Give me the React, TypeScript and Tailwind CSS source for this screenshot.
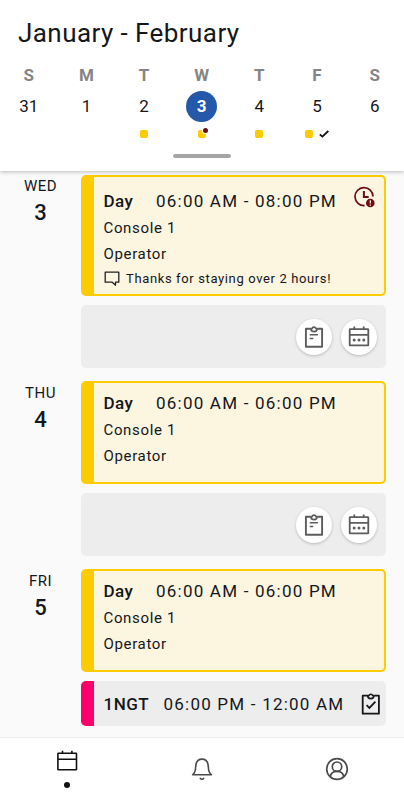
import type { ReactNode } from "react"

type Mark = "shift" | "alert" | "done"

const week: { day: string; date: number; mark?: Mark; selected?: boolean }[] = [
    { day: "S", date: 31 },
    { day: "M", date: 1 },
    { day: "T", date: 2, mark: "shift" },
    { day: "W", date: 3, mark: "alert", selected: true },
    { day: "T", date: 4, mark: "shift" },
    { day: "F", date: 5, mark: "done" },
    { day: "S", date: 6 },
]

function ClockAlertIcon() {
    return (
        <svg width="21" height="22" viewBox="0 0 21 22" fill="none" stroke="#6e0d10">
            <path d="M19 10.600A9 9 0 1 0 10.600 19.600" strokeWidth="1.700" />
            <path d="M9.900 5v6h4.800" strokeWidth="2" />
            <circle cx="16.300" cy="17" r="4.300" fill="#6e0d10" stroke="none" />
            <path d="M16.300 14.200v3.300M16.300 18.500v1.300" stroke="#fcf5e0" strokeWidth="1.200" />
        </svg>
    )
}

function NoteIcon() {
    return (
        <svg width="16" height="16" viewBox="0 0 16 16" fill="none" stroke="#222" strokeWidth="1.300" strokeLinejoin="round">
            <path d="M1.200 1.200h13.600v10H11.500v3l-3.300-3h-7z" />
        </svg>
    )
}

function ClipboardIcon() {
    return (
        <svg width="20" height="24" viewBox="0 0 20 24" fill="none" stroke="#5c5c5c" strokeWidth="1.900" strokeLinejoin="round">
            <path d="M6.500 3.800H1.900v17.900h16.200V3.800h-4.600" />
            <path d="M6.900 3.600h1.200a2 2 0 0 1 3.800 0h1.200a3.100 3.100 0 0 1-6.200 0z" strokeWidth="1.700" />
            <path d="M5.700 9.800h8.200M5.700 13.500h3.600" strokeWidth="1.600" />
        </svg>
    )
}

function CalendarDotsIcon() {
    return (
        <svg width="22" height="22" viewBox="0 0 22 22" fill="none" stroke="#5c5c5c" strokeWidth="1.800" strokeLinejoin="round">
            <rect x="1.700" y="3.200" width="18.600" height="16.200" rx=".5" />
            <path d="M1.700 8.900h18.600M6.300 .6v2.600M15.700 .6v2.600" />
            <g fill="#5c5c5c" stroke="none">
                <circle cx="6.200" cy="13.900" r="1.500" />
                <circle cx="11" cy="13.900" r="1.500" />
                <circle cx="15.800" cy="13.900" r="1.500" />
            </g>
        </svg>
    )
}

function ClipboardCheckIcon() {
    return (
        <svg width="20" height="24" viewBox="0 0 20 24" fill="none" stroke="#15171b" strokeWidth="1.800" strokeLinejoin="round">
            <path d="M6.500 3.700H1.700v18h16.200v-18h-4.600" />
            <path d="M6.700 3.500H8a1.900 1.900 0 0 1 3.600 0h1.300a3.100 3.100 0 0 1-6.200 0z" strokeWidth="1.600" />
            <path d="M5.600 13.200l2.800 2.700 6-6.200" strokeLinejoin="miter" />
        </svg>
    )
}

function CalendarIcon() {
    return (
        <svg width="22" height="22" viewBox="0 0 22 22" fill="none" stroke="#111" strokeWidth="1.600" strokeLinejoin="round">
            <rect x="1.900" y="3.200" width="18.600" height="16.600" rx=".5" />
            <path d="M1.900 9.200h18.600M6.500 .8v2.400M15.900 .8v2.400" />
        </svg>
    )
}

function BellIcon() {
    return (
        <svg width="22" height="24" viewBox="0 0 22 24" fill="none" stroke="#4a4a4a" strokeWidth="1.600" strokeLinejoin="round" strokeLinecap="round">
            <path d="M1.600 17.800c2.300-1.800 2.900-3.600 3-7.300C4.700 5.200 6.900 2.100 11 2.100s6.300 3.100 6.400 8.400c.1 3.700.7 5.500 3 7.300z" />
            <path d="M9.300 21.400c.7 1.100 2.700 1.100 3.400 0" />
        </svg>
    )
}

function ProfileIcon() {
    return (
        <svg width="24" height="24" viewBox="0 0 24 24" fill="none" stroke="#4a4a4a" strokeWidth="1.700">
            <circle cx="12" cy="12" r="10.300" />
            <circle cx="12" cy="9.700" r="4.700" />
            <path d="M5.200 19.500c.8-3.300 3-5.100 6.800-5.100s6 1.800 6.800 5.100" />
        </svg>
    )
}

function DayMark({ mark }: { mark?: Mark }) {
    return (
        <div className="flex h-2 items-center justify-center gap-1.5">
            {mark && (
                <span className="relative size-2 rounded-xs bg-[#fccb00]">
                    {mark === "alert" && <span className="absolute -top-0.5 left-[5px] size-[5px] rounded-full bg-[#6e0d10] ring-1 ring-white" />}
                </span>
            )}
            {mark === "done" && (
                <svg width="10" height="8" viewBox="0 0 10 8" fill="none" stroke="#111" strokeWidth="1.800">
                    <path d="M.8 4.300l2.600 2.300L9.300 1" />
                </svg>
            )}
        </div>
    )
}

function DaySection({ day, date, className, children }: { day: string; date: number; className: string; children: ReactNode }) {
    return (
        <section className={`flex ${className}`}>
            <div className="w-[81px] shrink-0 text-center">
                <div className="h-[23px] text-[15px] leading-[23px] tracking-[0.5px]">{day}</div>
                <div className="h-[29px] text-[22px] leading-[29px] font-medium">{date}</div>
            </div>
            <div className="w-[305px]">{children}</div>
        </section>
    )
}

function ShiftCard({ time, note, alert }: { time: string; note?: string; alert?: boolean }) {
    return (
        <div
            className={
                note
                    ? "relative h-[121px] rounded-[5px] border-2 border-l-[13px] border-[#fccb00] bg-[#fcf5e0] pt-[11px] pl-[9.5px]"
                    : "relative h-[103px] rounded-[5px] border-2 border-l-[13px] border-[#fccb00] bg-[#fcf5e0] pt-[7px] pl-[9.5px]"
            }
        >
            <div className="flex h-[27px] text-[17px] leading-[26px]">
                <span className="w-[52.5px] font-medium tracking-[0.4px]">Day</span>
                <span className="whitespace-nowrap tracking-[1.22px]">{time}</span>
            </div>
            <div className="h-[26px] text-[15px] leading-[26px] tracking-[0.65px]">Console 1</div>
            <div className="h-[26px] text-[15px] leading-[26px] tracking-[0.65px]">Operator</div>
            {note && (
                <div className="flex h-6 items-center gap-[6px] pl-[0.5px] text-[13px] tracking-[0.63px] whitespace-nowrap">
                    <NoteIcon />
                    {note}
                </div>
            )}
            {alert && (
                <div className="absolute top-[9px] right-[9.5px]">
                    <ClockAlertIcon />
                </div>
            )}
        </div>
    )
}

function ActionRow() {
    return (
        <div className="mt-[9px] flex h-[63px] items-center justify-end gap-[9px] rounded-[5px] bg-[#ededed] pr-[9px]">
            <button className="flex size-9 items-center justify-center rounded-full bg-white shadow-[0_1px_3px_rgba(0,0,0,0.22)]">
                <ClipboardIcon />
            </button>
            <button className="flex size-9 items-center justify-center rounded-full bg-white shadow-[0_1px_3px_rgba(0,0,0,0.22)]">
                <CalendarDotsIcon />
            </button>
        </div>
    )
}

export default function App() {
    return (
        <div className="flex h-[800px] w-[404px] flex-col overflow-hidden bg-[#fafafa] font-['Roboto',sans-serif] text-[#15171b]">
            {/* Week header */}
            <header className="z-10 h-[171px] shrink-0 bg-white pt-4 shadow-[0_1px_4px_rgba(0,0,0,0.25)]">
                <h1 className="h-[46px] pl-[18px] text-[26px] leading-[35px] tracking-[0.43px]">January - February</h1>
                <div className="grid w-[403.500px] grid-cols-7 text-center">
                    {week.map((d, i) => (
                        <div key={i} className="flex flex-col items-center">
                            <div className="h-[29px] text-[17px] leading-[27px] font-bold text-[#858585]">{d.day}</div>
                            <div
                                className={
                                    d.selected
                                        ? "flex size-[31px] items-center justify-center rounded-full bg-[#2359a8] text-[17px] font-bold text-white"
                                        : "flex size-[31px] items-center justify-center text-[17px]"
                                }
                            >
                                {d.date}
                            </div>
                            <div className="pt-2">
                                <DayMark mark={d.mark} />
                            </div>
                        </div>
                    ))}
                </div>
                <div className="mx-auto mt-4 h-1 w-[58px] rounded-full bg-[#a6a6a6]" />
            </header>

            {/* Shift list */}
            <main className="h-[566px] shrink-0 overflow-hidden pt-1">
                <DaySection day="WED" date={3} className="h-[206px]">
                    <ShiftCard time="06:00 AM - 08:00 PM" note="Thanks for staying over 2 hours!" alert />
                    <ActionRow />
                </DaySection>
                <DaySection day="THU" date={4} className="h-[188px] [&>div:first-child]:pt-px">
                    <ShiftCard time="06:00 AM - 06:00 PM" />
                    <ActionRow />
                </DaySection>
                <DaySection day="FRI" date={5} className="h-[157px] [&>div:first-child]:pt-px">
                    <ShiftCard time="06:00 AM - 06:00 PM" />
                    <div className="mt-[9px] flex h-[45px] items-center rounded-[5px] border-l-[13px] border-[#ff006a] bg-[#ededed] pl-[9.5px] text-[17px]">
                        <span className="w-[60px] pt-0.5 font-medium tracking-[0.5px]">1NGT</span>
                        <span className="pt-0.5 whitespace-nowrap tracking-[1.22px]">06:00 PM - 12:00 AM</span>
                        <span className="ml-auto pr-[5px]">
                            <ClipboardCheckIcon />
                        </span>
                    </div>
                </DaySection>
            </main>

            {/* Bottom tabs */}
            <nav className="grid h-[63px] shrink-0 grid-cols-3 border-t border-[#ececec] bg-white">
                <div className="flex flex-col items-center gap-2.5 pt-3">
                    <CalendarIcon />
                    <span className="size-1.5 rounded-full bg-[#111]" />
                </div>
                <div className="flex items-center justify-center">
                    <BellIcon />
                </div>
                <div className="flex items-center justify-center">
                    <ProfileIcon />
                </div>
            </nav>
        </div>
    )
}
